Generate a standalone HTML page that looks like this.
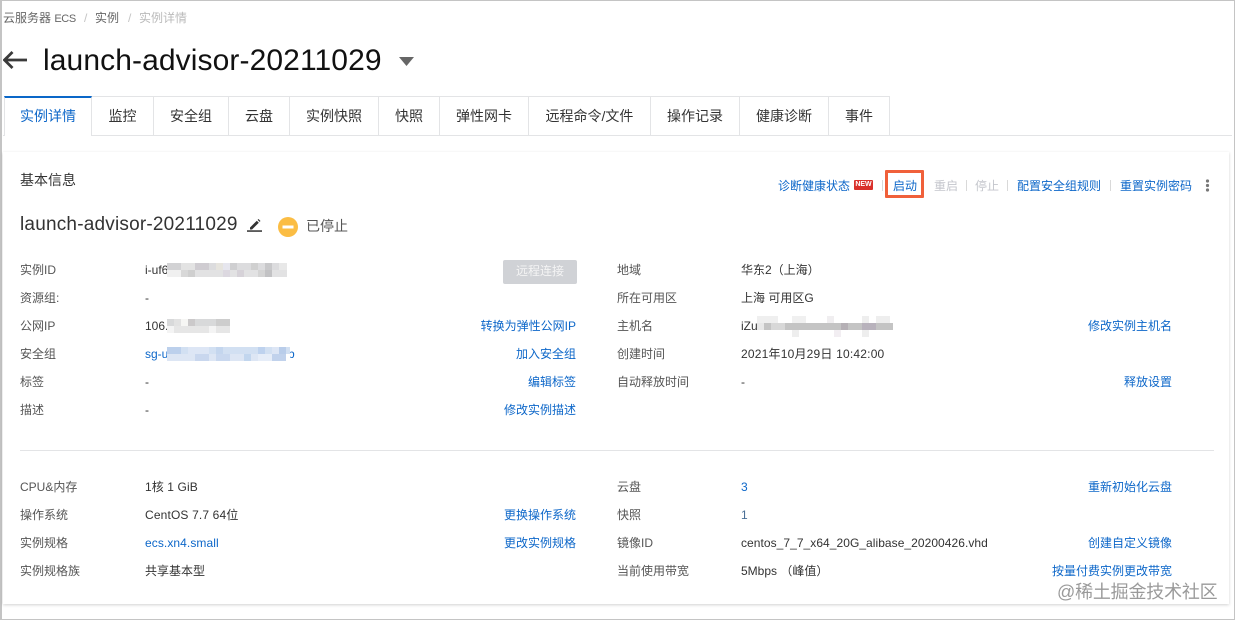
<!DOCTYPE html>
<html lang="zh-CN">
<head>
<meta charset="utf-8">
<title>实例详情</title>
<style>
html,body{margin:0;padding:0;background:#fff}
body{width:1235px;height:620px;position:relative;overflow:hidden;font-family:"Liberation Sans","Noto Sans CJK SC",sans-serif;font-size:12px;color:#333}
.t{position:absolute;white-space:nowrap;line-height:20px;height:20px}
.l{color:#555}
.b{color:#0d67c9}
.r{text-align:right}
.frame{position:absolute;left:0;top:0;height:618px;border:1px solid #c4c4c4;border-left-width:2px;box-sizing:content-box;width:1232px}
.card{position:absolute;left:3px;top:152px;width:1226px;height:452px;background:#fff;box-shadow:0 1px 3px rgba(0,0,0,.18)}
.tab{position:absolute;top:96px;height:39px;box-sizing:border-box;border:1px solid #e3e4e6;border-left:0;border-bottom:0;text-align:center;font-size:14px;line-height:39px;color:#333;background:#fff}
.hl{position:absolute;background:#e3e4e6}
.sep{position:absolute;top:180px;width:1px;height:11px;background:#d9d9d9}
svg{position:absolute;display:block}
</style>
</head>
<body>
<div class="frame"></div>

<div class="t" style="left:3px;top:8px;color:#666">云服务器 <span style="font-size:11px;letter-spacing:-.4px">ECS</span></div>
<div class="t" style="left:84px;top:8px;color:#c4c4c4">/</div>
<div class="t" style="left:95px;top:8px;color:#666">实例</div>
<div class="t" style="left:128px;top:8px;color:#c4c4c4">/</div>
<div class="t" style="left:139px;top:8px;color:#bbb">实例详情</div>

<svg style="left:3px;top:50px" width="25" height="20" viewBox="0 0 25 20"><path d="M24 10H1.500M9.500 2 1.500 10l8 8" fill="none" stroke="#3a3a3a" stroke-width="2.800"/></svg>
<div class="t" style="left:43px;top:42px;height:38px;line-height:38px;font-size:30px;color:#111;letter-spacing:.1px">launch-advisor-20211029</div>
<svg style="left:399px;top:57px" width="15" height="9"><path d="M0 0h15L7.500 9z" fill="#666"/></svg>

<div class="hl" style="left:3px;top:135px;width:1229px;height:1px"></div>
<div class="tab" style="left:4px;width:88px;height:40px;border-top:2px solid #0a67c8;color:#0d67c9;line-height:37px;border-left:1px solid #e3e4e6">实例详情</div>
<div class="tab" style="left:92px;width:62px">监控</div>
<div class="tab" style="left:154px;width:75px">安全组</div>
<div class="tab" style="left:229px;width:61px">云盘</div>
<div class="tab" style="left:290px;width:89px">实例快照</div>
<div class="tab" style="left:379px;width:61px">快照</div>
<div class="tab" style="left:440px;width:89px">弹性网卡</div>
<div class="tab" style="left:529px;width:122px">远程命令/文件</div>
<div class="tab" style="left:651px;width:89px">操作记录</div>
<div class="tab" style="left:740px;width:89px">健康诊断</div>
<div class="tab" style="left:829px;width:61px">事件</div>

<div class="card"></div>

<div class="t" style="left:20px;top:170px;font-size:14px">基本信息</div>

<div class="t b" style="left:778px;top:176px">诊断健康状态</div>
<div style="position:absolute;left:854px;top:180px;width:19px;height:10px;background:#d9302a;border-radius:1px;color:#fff;font-size:7px;font-weight:bold;line-height:10px;text-align:center;overflow:hidden">NEW</div>
<div class="sep" style="left:882px"></div>
<div style="position:absolute;left:885px;top:170px;width:39px;height:28px;box-sizing:border-box;border:3px solid #f0603a;border-radius:1px;background:#fff"></div>
<div class="t b" style="left:893px;top:176px">启动</div>
<div class="t" style="left:934px;top:176px;color:#c4c6cc">重启</div>
<div class="sep" style="left:966px"></div>
<div class="t" style="left:975px;top:176px;color:#c4c6cc">停止</div>
<div class="sep" style="left:1007px"></div>
<div class="t b" style="left:1017px;top:176px">配置安全组规则</div>
<div class="sep" style="left:1110px"></div>
<div class="t b" style="left:1120px;top:176px">重置实例密码</div>
<svg style="left:1205px;top:179px" width="5" height="13"><circle cx="2.500" cy="2" r="1.600" fill="#777"/><circle cx="2.500" cy="6.500" r="1.600" fill="#777"/><circle cx="2.500" cy="11" r="1.600" fill="#777"/></svg>

<div class="t" style="left:20px;top:214px;font-size:19px;color:#333;height:22px;line-height:22px;letter-spacing:.2px">launch-advisor-20211029</div>
<svg style="left:247px;top:218px" width="15" height="14" viewBox="0 0 15 14"><path d="M3 9.500 9.800 2.700l2 2L5 11.500H3zM10.600 1.900l.9-.9 2 2-.9.900z" fill="#333"/><rect x="0" y="12.300" width="15" height="1.500" fill="#333"/></svg>
<svg style="left:278px;top:217px" width="20" height="20"><circle cx="10" cy="10" r="10" fill="#fbbd44"/><rect x="4.500" y="8.500" width="11" height="3" fill="#fff"/></svg>
<div class="t" style="left:306px;top:216px;font-size:14px;color:#555">已停止</div>

<!-- left top -->
<div class="t l" style="left:20px;top:260px">实例ID</div>
<div class="t" style="left:145px;top:260px">i-uf6</div>
<svg style="left:167px;top:263px" width="120" height="14" shape-rendering="crispEdges"><g>
<rect width="120" height="7" fill="#dcdcde"/><rect y="7" width="120" height="7" fill="#e2e2e3"/>
<rect x="0" width="14" height="7" fill="#d2d2d4"/><rect x="14" width="14" height="7" fill="#e3e3e3"/><rect x="28" width="14" height="7" fill="#cfccd1"/><rect x="49" width="7" height="7" fill="#e6e4de"/><rect x="56" width="7" height="7" fill="#e6e6ee"/><rect x="63" width="7" height="7" fill="#cfcfd1"/><rect x="84" width="7" height="7" fill="#d0d0d0"/><rect x="98" width="7" height="7" fill="#c8c8ca"/><rect x="112" width="8" height="7" fill="#e8e8e8"/>
<rect x="0" y="7" width="14" height="7" fill="#f0f0f0"/><rect x="14" y="7" width="7" height="7" fill="#d8d8d8"/><rect x="21" y="7" width="7" height="7" fill="#cfcfcf"/><rect x="56" y="7" width="7" height="7" fill="#dcd8e0"/><rect x="70" y="7" width="7" height="7" fill="#d6d2d8"/><rect x="91" y="7" width="7" height="7" fill="#d4d4d4"/><rect x="98" y="7" width="7" height="7" fill="#c2c2c4"/></g></svg>
<div style="position:absolute;left:503px;top:260px;width:74px;height:24px;background:#d0d2d6;border-radius:2px;color:#f4f4f4;text-align:center;line-height:22px">远程连接</div>

<div class="t l" style="left:20px;top:288px">资源组:</div>
<div class="t" style="left:145px;top:288px">-</div>

<div class="t l" style="left:20px;top:316px">公网IP</div>
<div class="t" style="left:145px;top:316px">106.</div>
<svg style="left:167px;top:319px" width="63" height="14" shape-rendering="crispEdges">
<rect width="63" height="7" fill="#d8d9da"/><rect y="7" width="63" height="7" fill="#e6e6e6"/>
<rect x="7" width="7" height="7" fill="#e2e2e2"/><rect x="14" width="7" height="7" fill="#f6f6f4"/><rect x="21" width="7" height="7" fill="#cbc9ca"/><rect x="49" width="14" height="7" fill="#cdcdcd"/>
<rect x="0" y="7" width="7" height="7" fill="#f4f4f4"/><rect x="42" y="7" width="7" height="7" fill="#f4f4f4"/></svg>
<div class="t b r" style="right:659px;top:316px">转换为弹性公网IP</div>

<div class="t l" style="left:20px;top:344px">安全组</div>
<div class="t b" style="left:145px;top:344px">sg-u</div>
<div class="t b" style="left:288px;top:344px">b</div>
<svg style="left:167px;top:347px" width="123" height="14" shape-rendering="crispEdges">
<rect width="123" height="7" fill="#d2e0f2"/><rect y="7" width="123" height="7" fill="#dde6f4"/>
<rect x="0" width="14" height="7" fill="#bcd0ec"/><rect x="21" width="21" height="7" fill="#dde6f5"/><rect x="49" width="7" height="7" fill="#c4d6ee"/><rect x="91" width="7" height="7" fill="#bed2ee"/><rect x="105" width="7" height="7" fill="#dde6f5"/><rect x="112" width="7" height="7" fill="#b9cdea"/>
<rect x="28" y="7" width="14" height="7" fill="#c9d7ee"/><rect x="49" y="7" width="14" height="7" fill="#c9d8ef"/><rect x="77" y="7" width="7" height="7" fill="#c2d6ee"/><rect x="91" y="7" width="14" height="7" fill="#e6edf8"/><rect x="105" y="7" width="14" height="7" fill="#c1d2ec"/><rect x="119" y="7" width="4" height="7" fill="#fff"/></svg>
<div class="t b r" style="right:659px;top:344px">加入安全组</div>

<div class="t l" style="left:20px;top:372px">标签</div>
<div class="t" style="left:145px;top:372px">-</div>
<div class="t b r" style="right:659px;top:372px">编辑标签</div>

<div class="t l" style="left:20px;top:400px">描述</div>
<div class="t" style="left:145px;top:400px">-</div>
<div class="t b r" style="right:659px;top:400px">修改实例描述</div>

<!-- right top -->
<div class="t l" style="left:617px;top:260px">地域</div>
<div class="t" style="left:741px;top:260px">华东2（上海）</div>
<div class="t l" style="left:617px;top:288px">所在可用区</div>
<div class="t" style="left:741px;top:288px">上海 可用区G</div>
<div class="t l" style="left:617px;top:316px">主机名</div>
<div class="t" style="left:741px;top:316px">iZu</div>
<svg style="left:757px;top:316px" width="136" height="21" shape-rendering="crispEdges">
<rect x="0" width="21" height="7" fill="#efefef"/><rect x="35" width="14" height="7" fill="#f0f0f0"/><rect x="70" width="7" height="7" fill="#f0eef0"/><rect x="105" width="7" height="7" fill="#eee"/><rect x="119" width="14" height="7" fill="#eee"/>
<rect x="0" y="7" width="136" height="7" fill="#c4c4c4"/><rect x="0" y="7" width="7" height="7" fill="#e8e8e8"/><rect x="14" y="7" width="14" height="7" fill="#d8d8d8"/><rect x="84" y="7" width="7" height="7" fill="#b5b0b5"/><rect x="105" y="7" width="14" height="7" fill="#b8b2bc"/>
<rect x="35" y="14" width="7" height="7" fill="#eee"/><rect x="77" y="14" width="7" height="7" fill="#f2eef2"/><rect x="105" y="14" width="7" height="7" fill="#eee"/></svg>
<div class="t b r" style="right:63px;top:316px">修改实例主机名</div>
<div class="t l" style="left:617px;top:344px">创建时间</div>
<div class="t" style="left:741px;top:344px;letter-spacing:.2px">2021年10月29日 10:42:00</div>
<div class="t l" style="left:617px;top:372px">自动释放时间</div>
<div class="t" style="left:741px;top:372px">-</div>
<div class="t b r" style="right:63px;top:372px">释放设置</div>

<div class="hl" style="left:20px;top:450px;width:1194px;height:1px"></div>

<!-- left bottom -->
<div class="t l" style="left:20px;top:477px">CPU&amp;内存</div>
<div class="t" style="left:145px;top:477px;letter-spacing:.1px">1核 1 GiB</div>
<div class="t l" style="left:20px;top:505px">操作系统</div>
<div class="t" style="left:145px;top:505px;letter-spacing:.15px">CentOS 7.7 64位</div>
<div class="t b r" style="right:659px;top:505px">更换操作系统</div>
<div class="t l" style="left:20px;top:533px">实例规格</div>
<div class="t b" style="left:145px;top:533px;letter-spacing:.08px">ecs.xn4.small</div>
<div class="t b r" style="right:659px;top:533px">更改实例规格</div>
<div class="t l" style="left:20px;top:561px">实例规格族</div>
<div class="t" style="left:145px;top:561px">共享基本型</div>

<!-- right bottom -->
<div class="t l" style="left:617px;top:477px">云盘</div>
<div class="t b" style="left:741px;top:477px">3</div>
<div class="t b r" style="right:63px;top:477px">重新初始化云盘</div>
<div class="t l" style="left:617px;top:505px">快照</div>
<div class="t" style="left:741px;top:505px;color:#4a6f96">1</div>
<div class="t l" style="left:617px;top:533px">镜像ID</div>
<div class="t" style="left:741px;top:533px;letter-spacing:.05px">centos_7_7_x64_20G_alibase_20200426.vhd</div>
<div class="t b r" style="right:63px;top:533px">创建自定义镜像</div>
<div class="t l" style="left:617px;top:561px">当前使用带宽</div>
<div class="t" style="left:741px;top:561px">5Mbps （峰值）</div>
<div class="t b r" style="right:63px;top:561px">按量付费实例更改带宽</div>

<div class="t" style="left:1057px;top:580px;height:24px;line-height:24px;font-size:18px;color:#9a9a9a;letter-spacing:-.2px;text-shadow:0 0 1px #fff">@稀土掘金技术社区</div>
</body>
</html>
